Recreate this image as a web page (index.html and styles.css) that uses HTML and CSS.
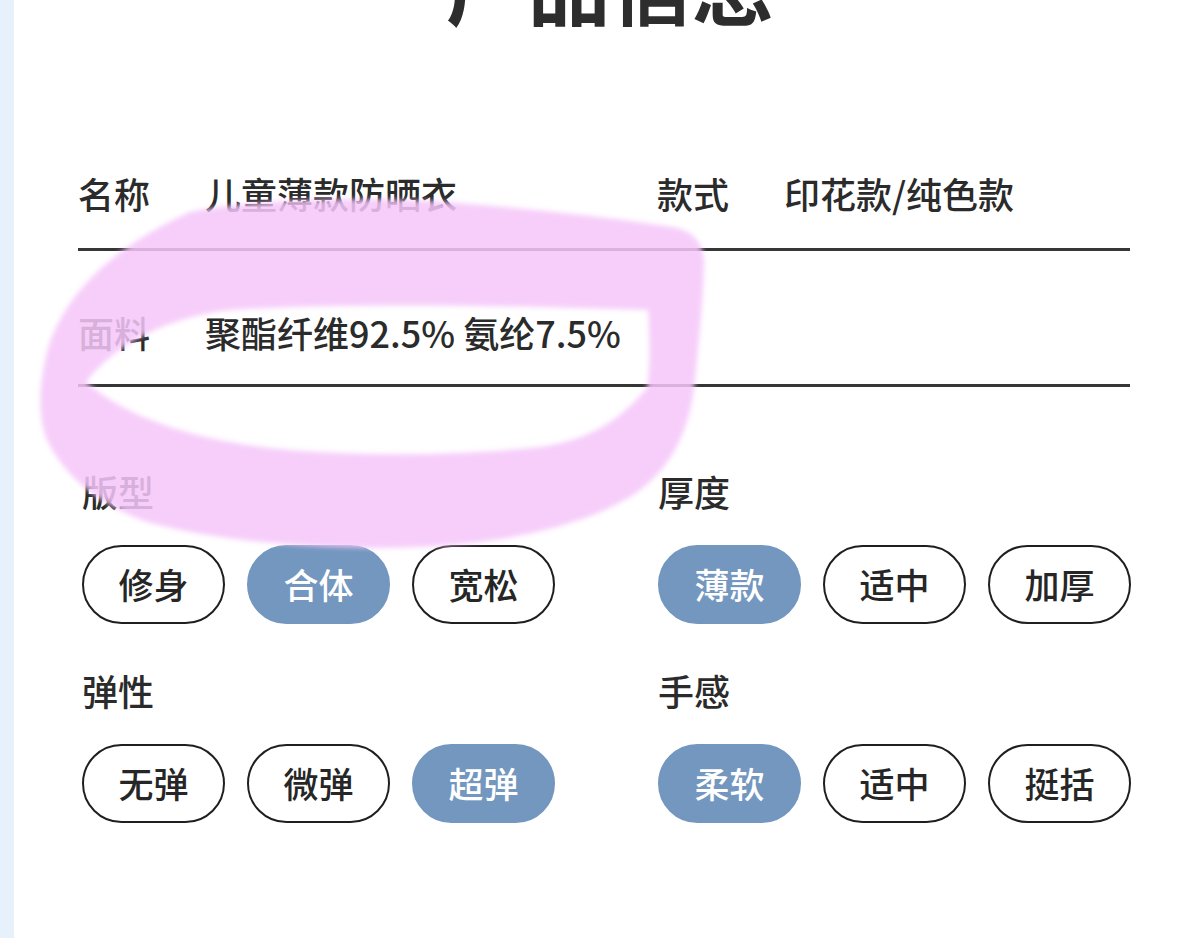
FILE: index.html
```html
<!DOCTYPE html>
<html lang="zh-CN">
  <head>
    <meta charset="UTF-8" />
    <meta name="viewport" content="width=device-width, initial-scale=1.0" />
    <title>产品信息</title>
    <link rel="stylesheet" href="styles.css">
  </head>

  <body>
    <div class="card">
      <h1 class="title">产品信息</h1>

      <!-- basic fields -->
      <div class="fields">
        <div class="row">
          <div class="field">
            <span class="field-label">名称</span>
            <span class="field-value">儿童薄款防晒衣</span>
          </div>
          <div class="field">
            <span class="field-label">款式</span>
            <span class="field-value">印花款/纯色款</span>
          </div>
        </div>
        <div class="row">
          <div class="field">
            <span class="field-label">面料</span>
            <span class="field-value">聚酯纤维92.5% 氨纶7.5%</span>
          </div>
        </div>
      </div>

      <!-- options -->
      <div class="options">
        <div class="group">
          <div class="group-label">版型</div>
          <div class="pills">
            <span class="pill">修身</span>
            <span class="pill active">合体</span>
            <span class="pill">宽松</span>
          </div>
        </div>
        <div class="group">
          <div class="group-label">厚度</div>
          <div class="pills">
            <span class="pill active">薄款</span>
            <span class="pill">适中</span>
            <span class="pill">加厚</span>
          </div>
        </div>
        <div class="group">
          <div class="group-label">弹性</div>
          <div class="pills">
            <span class="pill">无弹</span>
            <span class="pill">微弹</span>
            <span class="pill active">超弹</span>
          </div>
        </div>
        <div class="group">
          <div class="group-label">手感</div>
          <div class="pills">
            <span class="pill active">柔软</span>
            <span class="pill">适中</span>
            <span class="pill">挺括</span>
          </div>
        </div>
      </div>
    </div>

    <!-- highlighter mark drawn over the page -->
    <svg class="marker" width="1177" height="938" viewBox="0 0 1177 938">
      <defs>
        <filter id="soft">
          <feGaussianBlur stdDeviation="2.5" />
        </filter>
      </defs>
      <path
        fill="#f5c6f9"
        fill-rule="evenodd"
        filter="url(#soft)"
        d="M190 212 C 260 198 380 196 470 204 C 540 210 620 218 678 228
           C 698 234 705 248 704 268 C 703 300 699 340 695 380
           C 690 432 670 472 630 497 C 580 527 500 544 420 547
           C 320 551 220 541 150 523 C 100 506 64 476 47 440
           C 37 415 39 380 49 345 C 64 300 105 250 190 212 Z
           M 86 382 C 110 350 160 318 230 310 C 350 302 520 306 648 310
           C 650 340 650 370 647 388 C 620 420 590 440 540 447
           C 460 456 360 456 290 450 C 200 442 130 420 86 382 Z"
      />
    </svg>
  </body>
</html>
```

FILE: styles.css
```css
body {
  margin: 0;
  background-color: #e7f1fc;
  font-family: "Noto Sans CJK SC", "Noto Sans", sans-serif;
  color: #2b2b2b;
  overflow: hidden;
}

.card {
  margin-left: 14px;
  height: 938px;
  background-color: #fff;
  padding: 0 47px 0 64px;
  overflow: hidden;
}

.title {
  margin: -57px 0 0;
  padding-left: 12px;
  font-size: 82px;
  line-height: 82px;
  font-weight: 700;
  text-align: center;
  color: #2d2d2d;
}

.fields {
  margin-top: 85px;
}

.row {
  display: grid;
  grid-template-columns: 579px 1fr;
  padding: 62px 0 33px;
  border-bottom: 3px solid #363636;
}

.row + .row {
  padding: 60px 0 30px;
}

.field {
  display: flex;
  font-size: 36px;
  line-height: 43px;
  font-weight: 500;
}

.field-label {
  width: 127px;
  flex-shrink: 0;
}

.options {
  display: grid;
  grid-template-columns: 576px 1fr;
  row-gap: 45px;
  margin-top: 83px;
  padding-left: 4px;
}

.group-label {
  font-size: 36px;
  line-height: 43px;
  font-weight: 500;
}

.pills {
  display: flex;
  gap: 22px;
  margin-top: 32px;
}

.pill {
  box-sizing: border-box;
  width: 143px;
  height: 79px;
  border: 2.5px solid #1f1f1f;
  border-radius: 40px;
  display: flex;
  align-items: center;
  justify-content: center;
  padding-bottom: 3px;
  font-size: 35px;
  font-weight: 500;
  color: #262626;
}

.pill.active {
  background-color: #7397be;
  border-color: #7397be;
  color: #fff;
}

.marker {
  position: absolute;
  left: 0;
  top: 0;
  pointer-events: none;
  opacity: 0.86;
}
```
